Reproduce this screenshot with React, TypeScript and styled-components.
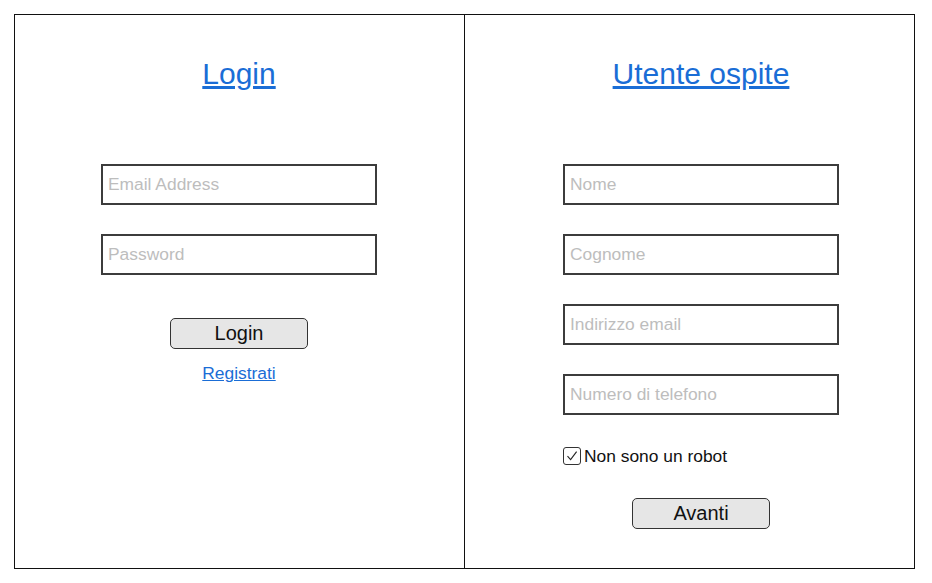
import React, { useState } from 'react';
import styled, { createGlobalStyle } from 'styled-components';

// -------- global ---------- //
const GlobalStyle = createGlobalStyle`
  html, body {
    margin: 0;
    padding: 0;
    background: #fff;
    font-family: "Liberation Sans", Arial, sans-serif;
  }
`;

// -------- main component ---------- //
const App = () => {
  const [notRobot, setNotRobot] = useState(true);

  return (
    <Page>
      <GlobalStyle />
      <Frame>
        <Panel $right={1}>
          <Title href="#">Login</Title>
          <Field placeholder="Email Address" />
          <Field type="password" placeholder="Password" />
          <Button $top={14}>Login</Button>
          <SmallLink href="#">Registrati</SmallLink>
        </Panel>
        <Panel $shift={23} $divider>
          <Title href="#">Utente ospite</Title>
          <Field placeholder="Nome" />
          <Field placeholder="Cognome" />
          <Field placeholder="Indirizzo email" />
          <Field placeholder="Numero di telefono" />
          <CheckRow onClick={() => setNotRobot(!notRobot)}>
            <CheckBox>
              {notRobot && (
                <svg width="14" height="14" viewBox="0 0 14 14">
                  <path d="M2.5 7.2 L5.6 10.6 L11.6 2.6" fill="none" stroke="#222" strokeWidth="1.1" />
                </svg>
              )}
            </CheckBox>
            Non sono un robot
          </CheckRow>
          <Button $top={0}>Avanti</Button>
        </Panel>
      </Frame>
    </Page>
  );
};

// ----------- styling ---------- //
const Page = styled.div`
  padding: 14px;
`;

const Frame = styled.div`
  width: 901px;
  height: 555px;
  box-sizing: border-box;
  border: 1px solid #111;
  display: grid;
  grid-template-columns: 449px 450px;
`;

const Panel = styled.div<{ $shift?: number; $right?: number; $divider?: boolean }>`
  display: flex;
  flex-direction: column;
  align-items: center;
  padding-top: 42px;
  padding-left: ${(p) => p.$shift || 0}px;
  padding-right: ${(p) => p.$right || 0}px;
  border-left: ${(p) => (p.$divider ? '1px solid #111' : 'none')};
`;

const Title = styled.a`
  font-size: 30px;
  line-height: 34px;
  color: #1a6dd6;
  text-decoration: underline;
  text-underline-offset: 2px;
  margin-bottom: 73px;
`;

const Field = styled.input`
  width: 276px;
  height: 41px;
  box-sizing: border-box;
  border: 2px solid #3c3c3c;
  padding: 0 5px;
  margin: 0 0 29px;
  font-family: "Liberation Sans", Arial, sans-serif;
  font-size: 17.4px;
  color: #222;
  outline: none;

  &::placeholder {
    color: #bdbdbd;
  }
`;

const Button = styled.button<{ $top: number }>`
  width: 138px;
  height: 31px;
  margin-top: ${(p) => p.$top}px;
  box-sizing: border-box;
  border: 1px solid #333;
  border-radius: 5px;
  background: #e6e6e6;
  font-family: "Liberation Sans", Arial, sans-serif;
  font-size: 20px;
  color: #111;
  padding: 0;
  cursor: pointer;
`;

const SmallLink = styled.a`
  margin-top: 14px;
  font-size: 17.4px;
  line-height: 20px;
  color: #1a6dd6;
  text-decoration: underline;
`;

const CheckRow = styled.label`
  width: 276px;
  display: flex;
  align-items: center;
  gap: 3px;
  height: 20px;
  margin-top: 2px;
  margin-bottom: 32px;
  font-size: 17.4px;
  color: #111;
  cursor: pointer;
`;

const CheckBox = styled.span`
  width: 18px;
  height: 18px;
  box-sizing: border-box;
  border: 1px solid #333;
  border-radius: 3px;
  display: flex;
  align-items: center;
  justify-content: center;
`;

export default App;
